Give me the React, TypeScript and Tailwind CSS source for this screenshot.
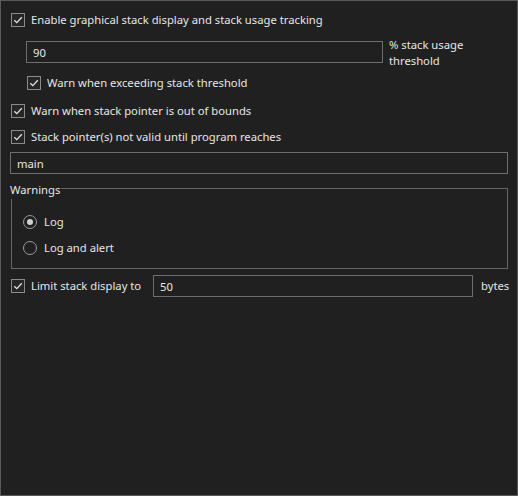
import { useState } from "react";

const font = { fontFamily: '"Noto Sans", "Segoe UI", sans-serif' };

function Check({ checked, onChange }: { checked: boolean; onChange: () => void }) {
  return (
    <button
      type="button"
      onClick={onChange}
      className="h-[14px] w-[14px] shrink-0 border border-[#8a8a8a] bg-[#262626] flex items-center justify-center"
    >
      {checked && (
        <svg width="12" height="12" viewBox="0 0 12 12">
          <polyline points="2.3,6.2 4.8,8.6 9.8,3.3" fill="none" stroke="#e4e4e4" strokeWidth="1.3" />
        </svg>
      )}
    </button>
  );
}

function Radio({ checked, onChange }: { checked: boolean; onChange: () => void }) {
  return (
    <button
      type="button"
      onClick={onChange}
      className="h-[14px] w-[14px] shrink-0 rounded-full border border-[#9a9a9a] flex items-center justify-center"
    >
      {checked && <span className="h-[6px] w-[6px] rounded-full bg-[#d0d0d0]" />}
    </button>
  );
}

function CheckRow({ label, checked, onChange, className }: { label: string; checked: boolean; onChange: () => void; className?: string }) {
  return (
    <div className={"flex items-center h-[16px] " + (className ?? "")}>
      <Check checked={checked} onChange={onChange} />
      <span className="ml-[6px]">{label}</span>
    </div>
  );
}

export default function App() {
  const [enable, setEnable] = useState(true);
  const [warnThreshold, setWarnThreshold] = useState(true);
  const [outOfBounds, setOutOfBounds] = useState(true);
  const [notValid, setNotValid] = useState(true);
  const [limit, setLimit] = useState(true);
  const [threshold, setThreshold] = useState("90");
  const [entry, setEntry] = useState("main");
  const [bytes, setBytes] = useState("50");
  const [mode, setMode] = useState<"log" | "alert">("log");

  const input =
    "h-[22px] border border-[#6e6e6e] bg-[#202020] px-[6px] text-[11.25px] text-[#e6e6e6] outline-none";

  return (
    <div
      style={font}
      className="w-[518px] h-[496px] border border-[#5a5a5a] bg-[#202020] text-[11.25px] leading-[16px] text-[#e6e6e6] pl-[10px] pr-[9px] pt-[11px] flex flex-col"
    >
      <CheckRow label="Enable graphical stack display and stack usage tracking" checked={enable} onChange={() => setEnable(!enable)} />

      <div className="flex items-start h-[22px] mt-[13px] ml-[15px]">
        <input value={threshold} onChange={(e) => setThreshold(e.target.value)} className={input + " w-[357px] shrink-0"} />
        <span className="ml-[6px] -mt-[4px] leading-[16px]">
          % stack usage
          <br />
          threshold
        </span>
      </div>

      <CheckRow
        className="mt-[12px] ml-[16px]"
        label="Warn when exceeding stack threshold"
        checked={warnThreshold}
        onChange={() => setWarnThreshold(!warnThreshold)}
      />
      <CheckRow
        className="mt-[12px]"
        label="Warn when stack pointer is out of bounds"
        checked={outOfBounds}
        onChange={() => setOutOfBounds(!outOfBounds)}
      />
      <CheckRow
        className="mt-[10px]"
        label="Stack pointer(s) not valid until program reaches"
        checked={notValid}
        onChange={() => setNotValid(!notValid)}
      />

      <input
        value={entry}
        onChange={(e) => setEntry(e.target.value)}
        className={input + " mt-[7px] -ml-px w-[498px] px-[5px]"}
      />

      {/* group box */}
      <div className="mt-[14px] h-[81px] flex flex-col border-r border-b border-[#666]">
        <div className="flex h-[11px]">
          <span className="-mt-[6px] -ml-px h-[16px] pr-[1px]">Warnings</span>
          <div className="flex-1 border-t border-[#666]" />
        </div>
        <div className="flex-1 border-l border-[#666] pl-[11px] flex flex-col">
          <div className="flex items-center h-[16px] mt-[15px]">
            <Radio checked={mode === "log"} onChange={() => setMode("log")} />
            <span className="ml-[7px]">Log</span>
          </div>
          <div className="flex items-center h-[16px] mt-[10px]">
            <Radio checked={mode === "alert"} onChange={() => setMode("alert")} />
            <span className="ml-[7px]">Log and alert</span>
          </div>
        </div>
      </div>

      <div className="flex items-center mt-[6px] h-[22px]">
        <div className="flex items-center w-[142px] shrink-0">
          <Check checked={limit} onChange={() => setLimit(!limit)} />
          <span className="ml-[6px]">Limit stack display to</span>
        </div>
        <input value={bytes} onChange={(e) => setBytes(e.target.value)} className={input + " w-[320px] shrink-0"} />
        <span className="ml-[8px]">bytes</span>
      </div>
    </div>
  );
}
